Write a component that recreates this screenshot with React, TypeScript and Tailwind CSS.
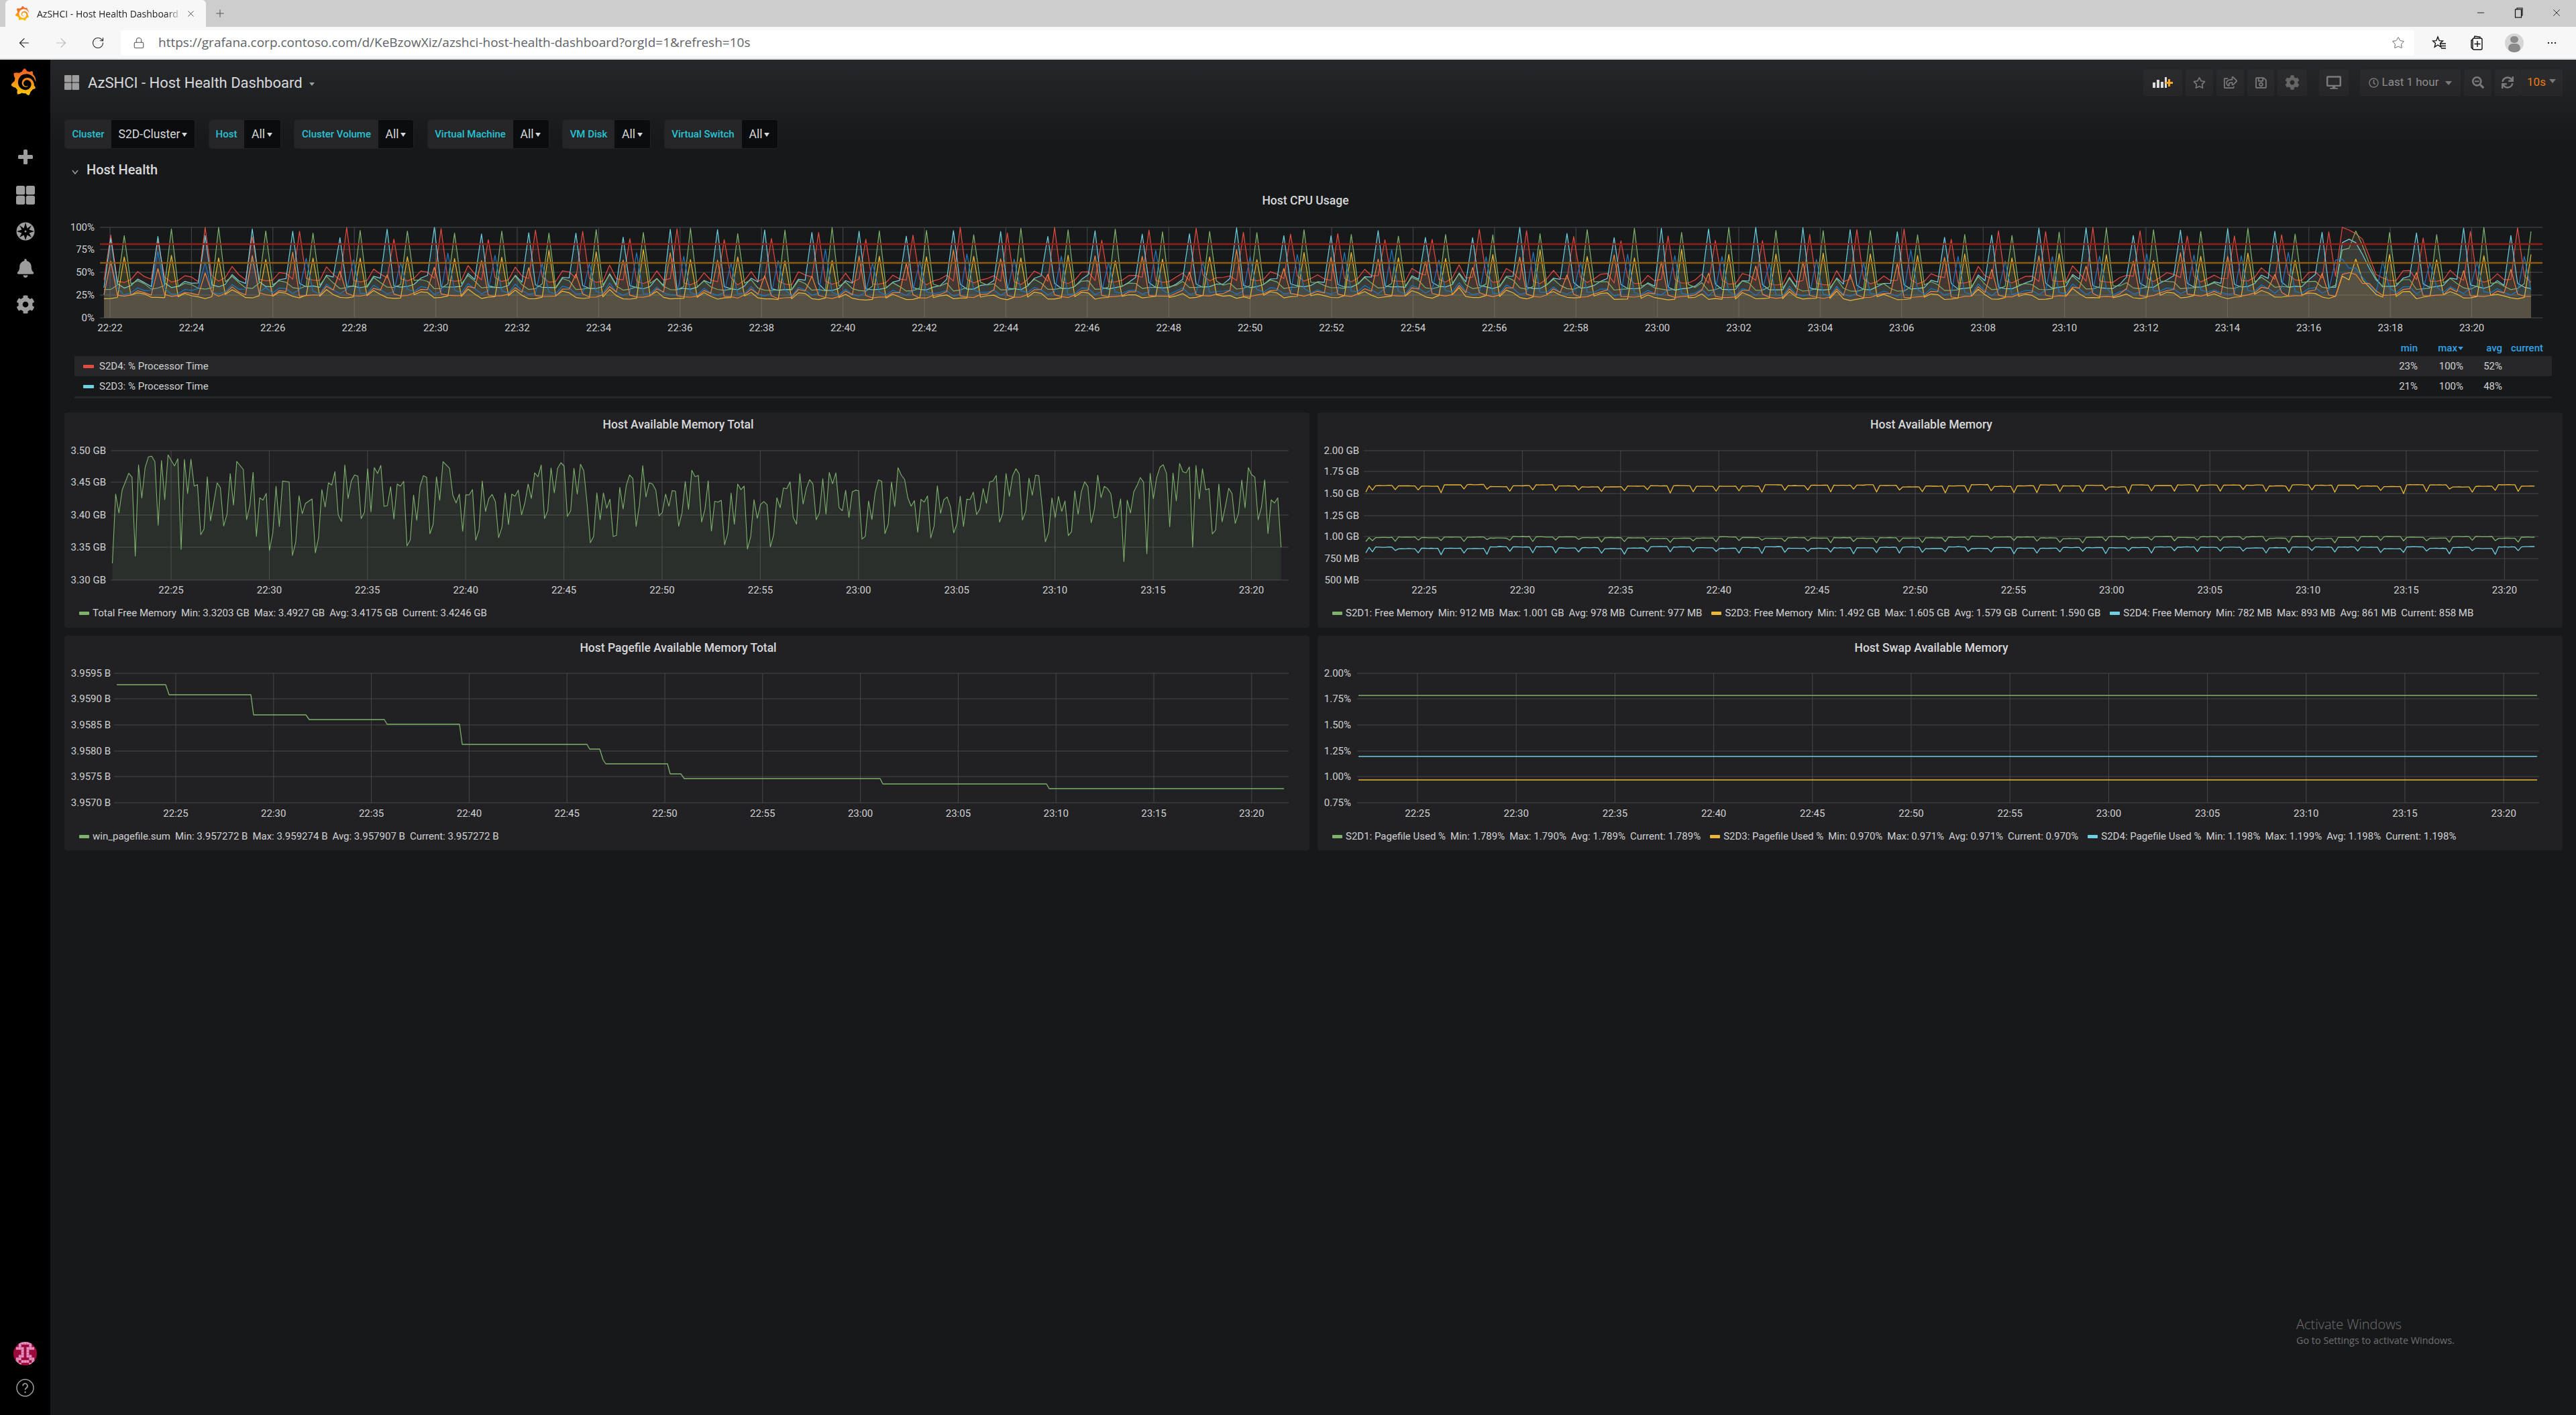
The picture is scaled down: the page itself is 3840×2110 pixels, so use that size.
import { FaBell, FaCog, FaDesktop, FaRegClock, FaRegSave, FaRegShareSquare, FaRegStar, FaSearchMinus, FaSync } from "react-icons/fa";
import { SiGrafana } from "react-icons/si";
import { ArrowLeft, ArrowRight, Lock, Minus, Plus, RotateCw, Star, X } from "lucide-react";
import type { ReactNode } from "react";

const GREEN = "#7eb26d";
const YELLOW = "#eab839";
const CYAN = "#6ed0e0";
const ORANGE = "#ef843c";
const RED = "#e24d42";
const BLUE = "#1f78c1";

// seeded so the picture stays the same on every load
const makeRand = (seed: number) => () => {
  seed = (seed + 0x6d2b79f5) | 0;
  let t = Math.imul(seed ^ (seed >>> 15), 1 | seed);
  t = (t + Math.imul(t ^ (t >>> 7), 61 | t)) ^ t;
  return ((t ^ (t >>> 14)) >>> 0) / 4294967296;
};

type Pt = [number, number];
const linePath = (pts: Pt[]) => pts.map(([x, y], i) => `${i ? "L" : "M"}${x.toFixed(1)} ${y.toFixed(1)}`).join("");
const areaPath = (pts: Pt[], bottom: number) =>
  `${linePath(pts)}L${pts[pts.length - 1][0].toFixed(1)} ${bottom}L${pts[0][0].toFixed(1)} ${bottom}Z`;

// CPU usage: six hosts, spikes every 7 samples
const buildCpu = () => {
  const r = makeRand(11);
  const N = 361;
  const common: number[] = [];
  for (let i = 0; i < N; i++) {
    const ph = i % 7;
    let c = Math.sin(i / 23) * 1.5 + r() * 1.5;
    if (ph === 5) c += 3 + r() * 12;
    if (ph === 6) c += 2 + r() * 7;
    if (ph === 4) c += r() * 4;
    common.push(c);
  }
  // plateau is the long busy stretch near 23:17, samples 332 to 337
  const make = (base: number, phase: (i: number) => number, lo: number, hi: number, wobble: number, plateau: number[], shoulder: number) => {
    const pts: Pt[] = [];
    for (let i = 0; i < N; i++) {
      let v = base + common[i] * (base / 30) + (r() - 0.5) * wobble;
      const d = (i - phase(i) + 700) % 7;
      if (d === 0) v = lo + r() * (hi - lo);
      if (d === 6 || d === 1) v += r() * shoulder;
      if (i >= 332 && i < 332 + plateau.length) v = plateau[i - 332];
      pts.push([155 + i * 10.05, 474 - Math.min(100, Math.max(14, v)) * 1.35]);
    }
    return pts;
  };
  const early = (a: number, b: number) => (i: number) => (i < 24 ? a : b);
  return [
    { color: RED, pts: make(38, () => 1, 85, 101, 1.5, [100, 97, 93, 87, 68, 48], 7) },
    { color: CYAN, pts: make(32, early(1, 0), 88, 101, 1, [83, 87, 83, 70, 55, 42], 6) },
    { color: GREEN, pts: make(31, () => 3, 90, 101, 1.5, [75, 77, 96, 80, 60, 44], 5) },
    { color: YELLOW, pts: make(21, () => 3, 62, 76, 2, [46, 42, 65, 42, 34, 26], 2) },
    { color: BLUE, pts: make(25, early(1, 2), 60, 76, 1, [65, 55, 55, 45, 36, 28], 7) },
    { color: ORANGE, pts: make(23, early(1, 0), 46, 76, 1.5, [48, 50, 48, 38, 38, 30], 3) },
  ];
};

// read off the reference for the first half, then walked again with some jitter
const TOTAL_MEM = [700,380,465,362,325,287,305,658,250,398,262,214,211,235,520,230,405,205,230,254,222,628,225,378,224,344,338,562,536,303,500,415,330,352,523,472,289,430,234,252,270,495,430,283,570,397,407,377,632,555,345,525,322,324,326,655,595,388,468,422,412,402,643,575,360,438,330,340,280,473,503,250,400,322,295,300,490,462,267,460,262,288,252,435,432,347,492,335,345,323,612,585,385,498,345,298,305,558,515,303,408,235,250,265,385,420,380,547,383,384,360,587,540,322,458,400,382,415,575,530,375,517,380,390,362,473,420,335,400,285,303,250,490,455,263,375,265,240,255,480,455,265,380,247,275,420,598,570,375,495,375,443,403,570,565,350,447,340,295,310,525,430,253,393,330,335,362,478,462,380];

const buildTotalMem = (): Pt[] => {
  const r = makeRand(5);
  const pts: Pt[] = [];
  for (let i = 0; i < 358; i++) {
    const x = 167.5 + i * 4.88;
    const zy = i < TOTAL_MEM.length
      ? TOTAL_MEM[i]
      : 450 + (TOTAL_MEM[(i + 31) % TOTAL_MEM.length] - 440) * 0.85 + (r() - 0.5) * 30;
    pts.push([x, 610 + Math.max(205, Math.min(690, zy)) / 3]);
  }
  return pts;
};

const buildFree = (base: number, dip: number, seed: number): Pt[] => {
  const r = makeRand(seed);
  const pts: Pt[] = [];
  let level = 0;
  for (let i = 0; i < 358; i++) {
    if (i % 7 === 3) level = (r() - 0.5) * 3.5;
    let y = base + level + (r() - 0.5) * 0.6;
    if (i % 7 === 2) y += dip * (0.6 + r() * 0.6);
    if (i === 0) y += dip;
    pts.push([2036 + i * 4.88, y]);
  }
  return pts;
};

const PAGEFILE: Pt[] = [
  [174, 1021], [247, 1021], [252, 1036], [374, 1036], [378, 1066], [456, 1066], [461, 1073], [573, 1073],
  [577, 1080], [685, 1080], [689, 1110], [875, 1110], [879, 1117], [894, 1117], [899, 1133], [903, 1139],
  [995, 1139], [999, 1154], [1015, 1154], [1020, 1161], [1312, 1161], [1316, 1169], [1560, 1169], [1564, 1176], [1914, 1176],
];

const fiveMin = ["22:25","22:30","22:35","22:40","22:45","22:50","22:55","23:00","23:05","23:10","23:15","23:20"];
const twoMin = Array.from({ length: 30 }, (_, i) => {
  const m = 22 * 60 + 22 + i * 2;
  return `${Math.floor(m / 60)}:${String(m % 60).padStart(2, "0")}`;
});

type Series = { pts: Pt[]; color: string; fill?: number };
interface ChartProps {
  view: [number, number, number, number];
  plot: { left: number; right: number; top: number; bottom: number };
  yTicks: [string, number][];
  yLabelX: number;
  xTicks: [string, number][];
  xLabelY: number;
  series: Series[];
  thresholds?: [number, string][];
  lineWidth?: number;
}

const Chart = ({ view, plot, yTicks, yLabelX, xTicks, xLabelY, series, thresholds, lineWidth = 1.3 }: ChartProps) => (
  <svg className="block shrink-0" width={view[2]} height={view[3]} viewBox={view.join(" ")}>
    {yTicks.map(([l, y]) => (
      <g key={l}>
        <line x1={plot.left} x2={plot.right} y1={y} y2={y} stroke="#3b3b3d" strokeWidth={1.4} />
        <text x={yLabelX} y={y} textAnchor="end" dominantBaseline="central" fontSize={15} fill="#d0d1d2">{l}</text>
      </g>
    ))}
    {xTicks.map(([l, x]) => (
      <g key={l}>
        <line x1={x} x2={x} y1={plot.top} y2={plot.bottom} stroke="#49494b" strokeWidth={1} />
        <text x={x} y={xLabelY} textAnchor="middle" dominantBaseline="central" fontSize={15} fill="#d0d1d2">{l}</text>
      </g>
    ))}
    {series.map((s, i) => s.fill ? <path key={i} d={areaPath(s.pts, plot.bottom)} fill={s.color} fillOpacity={s.fill} /> : null)}
    {series.map((s, i) => <path key={i} d={linePath(s.pts)} fill="none" stroke={s.color} strokeWidth={lineWidth} strokeLinejoin="round" />)}
    {thresholds?.map(([y, c]) => <line key={y} x1={plot.left} x2={plot.right} y1={y} y2={y} stroke={c} strokeWidth={2.5} />)}
  </svg>
);

const LegendItem = ({ color, name, values }: { color: string; name: string; values: string[] }) => (
  <div className="flex items-center whitespace-nowrap">
    <span className="mr-[5px] h-[5px] w-[15px] rounded-[1px]" style={{ backgroundColor: color }} />
    <span>{name}</span>
    {values.map((v) => <span key={v} className="ml-[7px]">{v}</span>)}
  </div>
);

const Panel = ({ title, legend, children }: { title: string; legend: ReactNode; children: ReactNode }) => (
  <div className="flex h-full flex-col rounded-[4px] bg-[#212124]">
    <div className="flex h-[28px] shrink-0 items-end justify-center pr-[26px] text-[17.5px] font-medium leading-[20px] text-[#d8d9da]">{title}</div>
    {children}
    <div className="flex h-[36px] items-center gap-[14px] pl-[22px] pt-[2px] text-[15px] text-[#d0d1d2]">{legend}</div>
  </div>
);

const Variable = ({ label, value, labelW, valueW }: { label: string; value: string; labelW: string; valueW: string }) => (
  <div className="flex h-[44px] overflow-hidden rounded-[4px] border border-[#212124]">
    <div className={`${labelW} flex items-center justify-center bg-[#262628] text-[15px] font-medium text-[#27c3d4]`}>{label}</div>
    <div className={`${valueW} flex items-center justify-center gap-[3px] bg-[#0b0c0e] text-[17.5px] text-[#d8d9da]`}>
      {value}
      <span className="mt-[2px] border-x-[4px] border-t-[6px] border-x-transparent border-t-[#d8d9da]" />
    </div>
  </div>
);

const NavBtn = ({ width, children }: { width: string; children: ReactNode }) => (
  <div className={`${width} flex h-[40px] items-center justify-center rounded-[3px] border border-[#29292b] bg-[linear-gradient(#2c2c2f,#262628)] text-[#7b7b7b]`}>
    {children}
  </div>
);

const GrafanaGradient = () => (
  <svg className="absolute h-0 w-0">
    <defs>
      <linearGradient id="grafana-grad" x1="0" y1="0" x2="0" y2="1">
        <stop offset="0" stopColor="#f05a28" />
        <stop offset="1" stopColor="#fbca0a" />
      </linearGradient>
    </defs>
  </svg>
);

const AVATAR_PIXELS: Pt[] = [
  [2,0],[3,0],[4,0],[5,0],[6,0],[2,1],[6,1],[1,2],[2,2],[3,2],[5,2],[6,2],[7,2],[3,3],[5,3],[3,4],[5,4],[2,5],[3,5],[5,5],[6,5],
  [1,6],[2,6],[6,6],[7,6],[0,7],[1,7],[3,7],[4,7],[5,7],[7,7],[8,7],[1,8],[2,8],[6,8],[7,8],
];

const cpu = buildCpu();
const totalMem = buildTotalMem();
const free = [
  { pts: buildFree(801.5, 6, 21), color: GREEN },
  { pts: buildFree(724.5, 9, 22), color: YELLOW },
  { pts: buildFree(816.5, 8, 23), color: CYAN },
];

const ROW2_Y: [string, number][] = [["3.50 GB", 672], ["3.45 GB", 719], ["3.40 GB", 768], ["3.35 GB", 816], ["3.30 GB", 865]];
const FREE_Y: [string, number][] = [["2.00 GB", 672], ["1.75 GB", 703], ["1.50 GB", 736], ["1.25 GB", 769], ["1.00 GB", 800], ["750 MB", 833], ["500 MB", 865]];
const PAGE_Y: [string, number][] = [["3.9595 B", 1004], ["3.9590 B", 1042], ["3.9585 B", 1081], ["3.9580 B", 1120], ["3.9575 B", 1158], ["3.9570 B", 1197]];
const SWAP_Y: [string, number][] = [["2.00%", 1004], ["1.75%", 1042], ["1.50%", 1081], ["1.25%", 1120], ["1.00%", 1158], ["0.75%", 1197]];

export default function App() {
  return (
    <div className="relative flex h-[2110px] w-[3840px] flex-col overflow-hidden bg-[#17181a] font-[Roboto,sans-serif]">
      <GrafanaGradient />

      {/* Browser tab strip */}
      <div className="flex h-[40px] shrink-0 items-end bg-[#cdcdcd] pl-[8px]">
        <div className="flex h-[40px] w-[299px] items-center rounded-t-[6px] bg-[#f7f7f7] pl-[14px] font-['Open_Sans',sans-serif] text-[14px] text-[#222]">
          <SiGrafana className="size-[22px] shrink-0 fill-[url(#grafana-grad)]" />
          <span className="ml-[11px] w-[216px] overflow-hidden whitespace-nowrap [mask-image:linear-gradient(to_right,black_90%,transparent)]">AzSHCI - Host Health Dashboard</span>
          <X className="ml-[6px] size-[15px]" strokeWidth={1.2} />
        </div>
        <Plus className="mb-[11px] ml-[12px] size-[18px] text-[#555]" strokeWidth={1.4} />
        <div className="mb-[12px] ml-auto flex items-center text-[#111]">
          <Minus className="size-[16px]" strokeWidth={1.3} />
          <svg className="ml-[40px] size-[16px]" viewBox="0 0 16 16" fill="none" stroke="currentColor" strokeWidth="1.2"><rect x="3.5" y="3" width="9" height="12" /><path d="M6 3V1h8v11h-1.5" /></svg>
          <X className="ml-[40px] mr-[20px] size-[18px]" strokeWidth={1.1} />
        </div>
      </div>

      {/* Browser toolbar */}
      <div className="flex h-[49px] shrink-0 items-center border-b-2 border-[#e0e0e0] bg-[#f7f7f7] pl-[8px] pr-[8px]">
        <div className="flex w-[55px] justify-center"><ArrowLeft className="size-[22px] text-[#222]" strokeWidth={1.3} /></div>
        <div className="flex w-[55px] justify-center"><ArrowRight className="size-[22px] text-[#bbb]" strokeWidth={1.3} /></div>
        <div className="flex w-[55px] justify-center"><RotateCw className="size-[20px] text-[#222]" strokeWidth={1.3} /></div>
        <div className="ml-[7px] flex h-[38px] flex-1 items-center rounded-[4px] bg-white pr-[14px] font-['Open_Sans',sans-serif] text-[19px] text-[#5f6368]">
          <Lock className="ml-[18px] size-[18px] text-[#555]" strokeWidth={1.4} />
          <span className="ml-[20px]">https://grafana.corp.contoso.com/d/KeBzowXiz/azshci-host-health-dashboard?orgId=1&amp;refresh=10s</span>
          <Star className="ml-auto size-[20px] text-[#666]" strokeWidth={1.2} />
        </div>
        <div className="ml-[9px] flex w-[56px] justify-center">
          <svg className="size-[22px]" viewBox="0 0 22 22" fill="none" stroke="#111" strokeWidth="1.4"><path d="M9 2l2.2 5.6 5.3.4-4 3.6 1.3 5.6L9 14l-4.8 3.2 1.3-5.6-4-3.6 5.3-.4z" /><path d="M13 12h8M14 15.500h7M14 19h7" /></svg>
        </div>
        <div className="flex w-[56px] justify-center">
          <svg className="size-[24px]" viewBox="0 0 24 24" fill="none" stroke="#111" strokeWidth="1.4"><rect x="6" y="5" width="14" height="17" rx="2" /><path d="M6 7L4 8v11l2 2M8 5l1-3 8 1v2M13 9v9M8.500 13.500h9" /></svg>
        </div>
        <div className="flex w-[56px] justify-center">
          <div className="flex size-[28px] flex-col items-center overflow-hidden rounded-full bg-[#d6d6d6] pt-[4px]">
            <span className="h-[12px] w-[12px] rounded-full bg-[#8a8a8a]" />
            <span className="mt-[1px] h-[14px] w-[18px] rounded-full bg-[#8a8a8a]" />
          </div>
        </div>
        <div className="flex w-[56px] justify-center gap-[3px]">
          <span className="size-[2px] bg-[#222]" /><span className="size-[2px] bg-[#222]" /><span className="size-[2px] bg-[#222]" />
        </div>
      </div>

      <div className="flex min-h-0 flex-1">
        {/* Grafana side menu */}
        <div className="flex w-[75px] shrink-0 flex-col items-center bg-black text-[#9d9d9d]">
          <SiGrafana className="mr-[5px] mt-[13px] size-[40px] shrink-0 fill-[url(#grafana-grad)]" />
          <div className="mt-[78px] flex size-[28px] items-center justify-center">
            <svg className="size-[22px]" viewBox="0 0 22 22" fill="currentColor"><rect x="8" y="0" width="6" height="22" rx="1.500" /><rect x="0" y="8" width="22" height="6" rx="1.500" /></svg>
          </div>
          <svg className="mt-[29px] size-[28px]" viewBox="0 0 28 28" fill="currentColor"><rect width="13.200" height="13.200" rx="2.500" /><rect x="14.800" width="13.200" height="13.200" rx="2.500" /><rect y="14.800" width="13.200" height="13.200" rx="2.500" /><rect x="14.800" y="14.800" width="13.200" height="13.200" rx="2.500" /></svg>
          <svg className="mt-[26px] size-[28px]" viewBox="0 0 28 28"><circle cx="14" cy="14" r="13.500" fill="currentColor" /><path d="M14 1l2.500 8.500L23 5l-3.500 6.500L27 14l-7.500 2.500L23 23l-6.500-3.500L14 27l-2.500-7.500L5 23l3.500-6.500L1 14l7.500-2.500L5 5l6.500 4.500z" fill="#000" /><circle cx="14" cy="14" r="1.500" fill="currentColor" /></svg>
          <FaBell className="mt-[27px] size-[28px]" />
          <FaCog className="mt-[26px] size-[28px]" />
          <svg className="mt-auto size-[35px] shrink-0" viewBox="0 0 35 35">
            <defs><clipPath id="avatar-clip"><circle cx="17.500" cy="17.500" r="17.500" /></clipPath></defs>
            <g clipPath="url(#avatar-clip)">
              <rect width="35" height="35" fill="#9c0a3c" />
              {AVATAR_PIXELS.map(([x, y]) => <rect key={`${x}-${y}`} x={x * 3.89} y={y * 3.89} width="3.900" height="3.900" fill="#e48fc0" />)}
            </g>
          </svg>
          <svg className="mb-[27px] mt-[20px] size-[27px] shrink-0" viewBox="0 0 27 27"><circle cx="13.500" cy="13.500" r="12.500" fill="none" stroke="currentColor" strokeWidth="1.500" /><path d="M10 10.500a3.500 3.500 0 1 1 5.500 3c-1.300.9-2 1.500-2 3" fill="none" stroke="currentColor" strokeWidth="1.800" /><circle cx="13.500" cy="20" r="1.200" fill="currentColor" /></svg>
        </div>

        {/* Dashboard */}
        <div className="min-w-0 flex-1 bg-[linear-gradient(#26272a_0px,#17181a_125px)] pl-[21px] pr-[20px] pt-[14px]">
          <div className="flex h-[40px] items-center">
            <svg className="size-[22px]" viewBox="0 0 22 22" fill="#9d9d9d"><rect width="10.500" height="10.500" rx="1" /><rect x="11.500" width="10.500" height="10.500" rx="1" /><rect y="11.500" width="10.500" height="10.500" rx="1" /><rect x="11.500" y="11.500" width="10.500" height="10.500" rx="1" /></svg>
            <span className="ml-[13px] text-[22px] text-[#d8d9da]">AzSHCI - Host Health Dashboard</span>
            <span className="ml-[10px] mt-[4px] border-x-[4px] border-t-[5px] border-x-transparent border-t-[#9d9d9d]" />

            <div className="ml-auto flex items-center">
              <NavBtn width="w-[58px]">
                <svg className="h-[16px] w-[30px]" viewBox="0 0 30 16"><path d="M0 8h4v8H0zM6 4h4v12H6zM12 7h4v9h-4zM18 0h3v16h-3z" fill="#dcdcdc" /><path d="M23 3h3v4h4v3h-4v4h-3v-4h-4V7h4z" fill="#f5a623" /></svg>
              </NavBtn>
              <div className="ml-[5px]"><NavBtn width="w-[41px]"><FaRegStar className="size-[19px]" /></NavBtn></div>
              <div className="ml-[5px]"><NavBtn width="w-[41px]"><FaRegShareSquare className="size-[20px]" /></NavBtn></div>
              <div className="ml-[5px]"><NavBtn width="w-[40px]"><FaRegSave className="size-[19px]" /></NavBtn></div>
              <div className="ml-[5px]"><NavBtn width="w-[44px]"><FaCog className="size-[22px] text-[#666]" /></NavBtn></div>
              <div className="ml-[18px]"><NavBtn width="w-[44px]"><FaDesktop className="size-[22px]" /></NavBtn></div>
              <div className="ml-[17px]">
                <NavBtn width="w-[150px]">
                  <FaRegClock className="size-[15px]" />
                  <span className="ml-[5px] text-[17px] text-[#8e8e8e]">Last 1 hour</span>
                  <span className="ml-[10px] mt-[2px] border-x-[5px] border-t-[6px] border-x-transparent border-t-[#7b7b7b]" />
                </NavBtn>
              </div>
              <div className="ml-[5px]"><NavBtn width="w-[41px]"><FaSearchMinus className="size-[18px]" /></NavBtn></div>
              <div className="ml-[5px]"><NavBtn width="w-[38px]"><FaSync className="size-[18px]" /></NavBtn></div>
              <NavBtn width="w-[63px]">
                <span className="text-[17px] text-[#eb7b18]">10s</span>
                <span className="mb-[4px] ml-[5px] border-x-[5px] border-t-[6px] border-x-transparent border-t-[#7b7b7b]" />
              </NavBtn>
            </div>
          </div>

          {/* Template variables */}
          <div className="mt-[35px] flex gap-[19.5px]">
            <Variable label="Cluster" value="S2D-Cluster" labelW="w-[69px]" valueW="w-[124px]" />
            <Variable label="Host" value="All" labelW="w-[52px]" valueW="w-[54px]" />
            <Variable label="Cluster Volume" value="All" labelW="w-[125px]" valueW="w-[52px]" />
            <Variable label="Virtual Machine" value="All" labelW="w-[127px]" valueW="w-[53px]" />
            <Variable label="VM Disk" value="All" labelW="w-[77px]" valueW="w-[53px]" />
            <Variable label="Virtual Switch" value="All" labelW="w-[115px]" valueW="w-[53px]" />
          </div>

          <div className="mt-[19px] flex h-[24px] items-center pl-[10px] text-[20px] font-medium text-[#d8d9da]">
            <svg className="mt-[6px] size-[12px]" viewBox="0 0 12 12" fill="none" stroke="#9d9d9d" strokeWidth="1.500"><path d="M2 4l4 5 4-5" /></svg>
            <span className="ml-[11px]">Host Health</span>
          </div>

          <div className="mt-[22px] flex h-[24px] items-center justify-center pr-[24px] text-[17.5px] font-medium text-[#d8d9da]">Host CPU Usage</div>
          <div className="mt-[9px]">
            <Chart
              view={[96, 320, 3724, 185]}
              plot={{ left: 149, right: 3790, top: 339, bottom: 474 }}
              yTicks={[["100%", 339], ["75%", 372], ["50%", 406], ["25%", 440], ["0%", 474]]}
              yLabelX={141}
              xTicks={twoMin.map((l, i): [string, number] => [l, 164 + i * 121.4])}
              xLabelY={489}
              series={cpu.map((s) => ({ ...s, fill: 0.1 }))}
              thresholds={[[364, "#8f2018"], [392, "#8f5a14"]]}
              lineWidth={1.2}
            />
          </div>

          {/* CPU legend table */}
          <div className="ml-[15px] mr-[16px] mt-[2px] text-[15px] text-[#d0d1d2]">
            <div className="flex h-[24px] items-center justify-end font-medium text-[#33a2e5]">
              <span className="w-[60px] text-right">min</span>
              <span className="w-[68px] text-right">max<span className="mb-[2px] ml-px inline-block border-x-[4px] border-t-[5px] border-x-transparent border-t-[#33a2e5]" /></span>
              <span className="w-[58px] text-right">avg</span>
              <span className="mr-[13px] w-[61px] text-right">current</span>
            </div>
            {[
              { color: RED, name: "S2D4: % Processor Time", min: "23%", avg: "52%", bg: "bg-[#27272a]" },
              { color: CYAN, name: "S2D3: % Processor Time", min: "21%", avg: "48%", bg: "" },
            ].map((row) => (
              <div key={row.name} className={`${row.bg} flex h-[30px] items-center pl-[13px]`}>
                <span className="mr-[8px] h-[5px] w-[16px] rounded-[1px]" style={{ backgroundColor: row.color }} />
                <span className="flex-1">{row.name}</span>
                <span className="w-[60px] text-right">{row.min}</span>
                <span className="w-[68px] text-right">100%</span>
                <span className="w-[58px] text-right">{row.avg}</span>
                <span className="mr-[13px] w-[61px]" />
              </div>
            ))}
            <div className="h-[3px] bg-[#27272a]" />
          </div>

          {/* Graph panels */}
          <div className="mt-[21px] grid grid-cols-2 grid-rows-[321px_320px] gap-x-[12px] gap-y-[12px]">
            <Panel
              title="Host Available Memory Total"
              legend={<LegendItem color={GREEN} name="Total Free Memory" values={["Min: 3.3203 GB", "Max: 3.4927 GB", "Avg: 3.4175 GB", "Current: 3.4246 GB"]} />}
            >
              <Chart
                view={[96, 643, 1856, 252]}
                plot={{ left: 165, right: 1921, top: 672, bottom: 865 }}
                yTicks={ROW2_Y}
                yLabelX={158}
                xTicks={fiveMin.map((l, i): [string, number] => [l, 255 + i * 146.4])}
                xLabelY={880}
                series={[{ pts: totalMem, color: GREEN, fill: 0.1 }]}
                lineWidth={1.1}
              />
            </Panel>
            <Panel
              title="Host Available Memory"
              legend={
                <>
                  <LegendItem color={GREEN} name="S2D1: Free Memory" values={["Min: 912 MB", "Max: 1.001 GB", "Avg: 978 MB", "Current: 977 MB"]} />
                  <LegendItem color={YELLOW} name="S2D3: Free Memory" values={["Min: 1.492 GB", "Max: 1.605 GB", "Avg: 1.579 GB", "Current: 1.590 GB"]} />
                  <LegendItem color={CYAN} name="S2D4: Free Memory" values={["Min: 782 MB", "Max: 893 MB", "Avg: 861 MB", "Current: 858 MB"]} />
                </>
              }
            >
              <Chart
                view={[1964, 643, 1856, 252]}
                plot={{ left: 2033, right: 3784, top: 672, bottom: 865 }}
                yTicks={FREE_Y}
                yLabelX={2026}
                xTicks={fiveMin.map((l, i): [string, number] => [l, 2123 + i * 146.4])}
                xLabelY={880}
                series={free}
              />
            </Panel>
            <Panel
              title="Host Pagefile Available Memory Total"
              legend={<LegendItem color={GREEN} name="win_pagefile.sum" values={["Min: 3.957272 B", "Max: 3.959274 B", "Avg: 3.957907 B", "Current: 3.957272 B"]} />}
            >
              <Chart
                view={[96, 976, 1856, 252]}
                plot={{ left: 170, right: 1921, top: 1004, bottom: 1197 }}
                yTicks={PAGE_Y}
                yLabelX={165}
                xTicks={fiveMin.map((l, i): [string, number] => [l, 262 + i * 145.8])}
                xLabelY={1213}
                series={[{ pts: PAGEFILE, color: GREEN }]}
              />
            </Panel>
            <Panel
              title="Host Swap Available Memory"
              legend={
                <>
                  <LegendItem color={GREEN} name="S2D1: Pagefile Used %" values={["Min: 1.789%", "Max: 1.790%", "Avg: 1.789%", "Current: 1.789%"]} />
                  <LegendItem color={YELLOW} name="S2D3: Pagefile Used %" values={["Min: 0.970%", "Max: 0.971%", "Avg: 0.971%", "Current: 0.970%"]} />
                  <LegendItem color={CYAN} name="S2D4: Pagefile Used %" values={["Min: 1.198%", "Max: 1.199%", "Avg: 1.198%", "Current: 1.198%"]} />
                </>
              }
            >
              <Chart
                view={[1964, 976, 1856, 252]}
                plot={{ left: 2023, right: 3785, top: 1004, bottom: 1197 }}
                yTicks={SWAP_Y}
                yLabelX={2014}
                xTicks={fiveMin.map((l, i): [string, number] => [l, 2113 + i * 147.2])}
                xLabelY={1213}
                series={[
                  { pts: [[2025, 1037], [3782, 1037]], color: GREEN },
                  { pts: [[2025, 1128], [3782, 1128]], color: CYAN },
                  { pts: [[2025, 1163], [3782, 1163]], color: YELLOW },
                ]}
              />
            </Panel>
          </div>
        </div>
      </div>

      {/* Windows activation watermark */}
      <div className="absolute left-[3423px] top-[1963px] font-['Open_Sans',sans-serif] text-[#707072]">
        <div className="text-[20px] font-light leading-[24px]">Activate Windows</div>
        <div className="text-[14.4px] leading-[24px]">Go to Settings to activate Windows.</div>
      </div>
    </div>
  );
}
